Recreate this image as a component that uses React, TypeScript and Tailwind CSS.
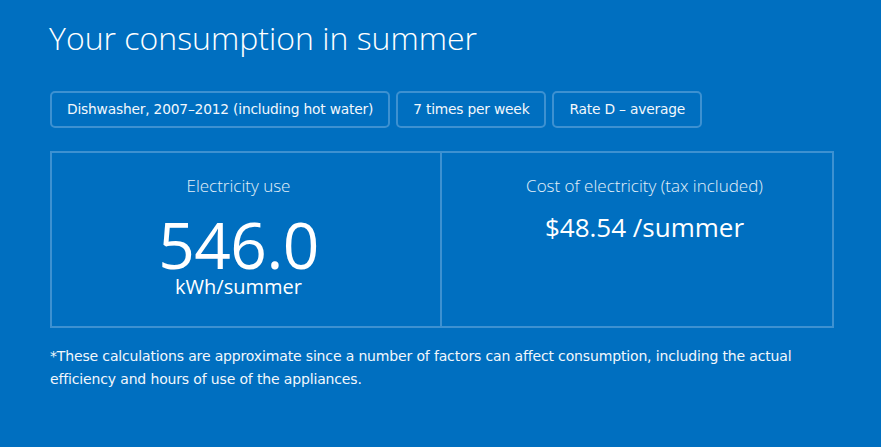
import React from 'react';

const chips = ['Dishwasher, 2007–2012 (including hot water)', '7 times per week', 'Rate D – average'];

const App: React.FC = () => {
  return (
    <div className="w-[881px] h-[447px] bg-[#006fc0] text-white font-['Open_Sans',sans-serif] box-border pl-[50px] pr-[47px] pt-[18px] overflow-hidden">
      <h1 className="text-[32px] font-light leading-[40px] m-0 -ml-px">Your consumption in summer</h1>
      <div className="flex gap-[6px] mt-[33px]">
        {chips.map((c) => (
          <span
            key={c}
            className="box-border h-[37px] flex items-center px-[15px] border-2 border-solid border-[#3d91d1] rounded-[5px] text-[13.8px] tracking-[-0.2px] font-['DejaVu_Sans',sans-serif] text-[#f2f7fc]"
          >
            {c}
          </span>
        ))}
      </div>
      <div className="grid grid-cols-2 mt-[23px] h-[177px] border-2 border-solid border-[#3d91d1] box-border">
        <div className="flex flex-col items-center pr-[15px] pt-[21px] border-r-2 border-solid border-[#3d91d1]">
          <div className="text-[17px] font-light leading-[24px] text-[#e3eff9]">Electricity use</div>
          <div className="text-[64px] leading-[48px] mt-[23px] tracking-[-0.5px]">546.0</div>
          <div className="text-[20px] leading-[24px] mt-[6px]">kWh/summer</div>
        </div>
        <div className="flex flex-col items-center pl-[15px] pt-[21px]">
          <div className="text-[17px] font-light leading-[24px] text-[#e3eff9]">Cost of electricity (tax included)</div>
          <div className="text-[26px] leading-[34px] mt-[12px]">$48.54 /summer</div>
        </div>
      </div>
      <p className="mt-[17px] w-[790px] text-[14px] leading-[23px] tracking-[-0.15px] font-['DejaVu_Sans',sans-serif] text-[#f2f7fc] m-0">
        *These calculations are approximate since a number of factors can affect consumption, including the actual
        efficiency and hours of use of the appliances.
      </p>
    </div>
  );
};

export default App;
